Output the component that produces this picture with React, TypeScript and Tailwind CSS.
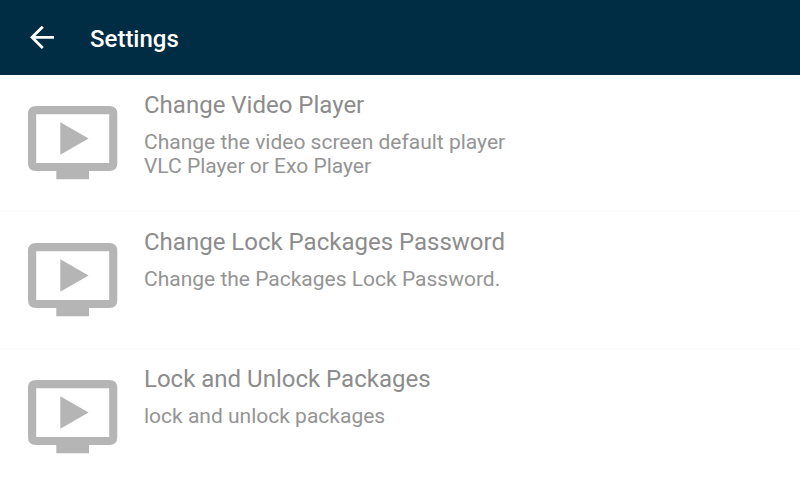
import React from "react";

const items = [
  {
    title: "Change Video Player",
    text: ["Change the video screen default player", "VLC Player or Exo Player"],
  },
  {
    title: "Change Lock Packages Password",
    text: ["Change the Packages Lock Password."],
  },
  {
    title: "Lock and Unlock Packages",
    text: ["lock and unlock packages"],
  },
];

function TvIcon() {
  return (
    <svg className="w-[90px] h-[74px] shrink-0" viewBox="0 0 90 74" fill="#b5b5b5" aria-hidden="true">
      <path
        fillRule="evenodd"
        d="M8 0H81.3Q89.3 0 89.3 8V57Q89.3 65 81.3 65H61V73.3H28.3V65H8Q0 65 0 57V8Q0 0 8 0ZM8.2 8.2V57H81.2V8.2Z"
      />
      <path d="M32.3 16.3V48.7L60.6 32.6Z" />
    </svg>
  );
}

export default function App() {
  return (
    <div className="min-h-screen bg-white font-['Roboto',sans-serif]">
      <header className="h-[75px] flex items-center gap-9 pl-[30px] bg-[#002d44] text-white">
        <button type="button" aria-label="Back">
          <svg className="w-6 h-6" viewBox="0 0 24 24" fill="none" stroke="currentColor" strokeWidth="2.8" aria-hidden="true">
            <path d="M24 11.3H2.2M12.8 0.7L2 11.3L12.8 22" />
          </svg>
        </button>
        <h1 className="pt-0.5 text-2xl font-medium">Settings</h1>
      </header>

      <ul>
        {items.map((item) => (
          <li key={item.title} className="h-[137px] border-b border-[#fafafa]">
            <a href="#" className="flex h-full items-start gap-[26px] pl-7 text-[#8c8c8c]">
              <div className="pt-[31px]">
                <TvIcon />
              </div>
              <div className="pt-4">
                <h2 className="text-2xl leading-7">{item.title}</h2>
                <p className="mt-[11px] text-[21px] leading-6 text-[#949494]">
                  {item.text.map((line) => (
                    <span key={line} className="block">{line}</span>
                  ))}
                </p>
              </div>
            </a>
          </li>
        ))}
      </ul>
    </div>
  );
}
